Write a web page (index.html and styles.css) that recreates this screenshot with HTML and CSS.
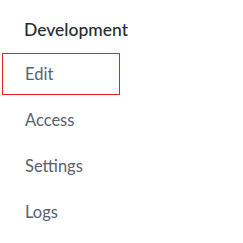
FILE: index.html
```html
<!DOCTYPE html>
<html lang="en">
<head>
    <meta charset="UTF-8">
    <meta name="viewport" content="width=device-width, initial-scale=1.0">
    <title>Development</title>
    <link rel="stylesheet" href="styles.css">
</head>
<body>
    <nav class="side-menu">
        <h3 class="menu-title">Development</h3>
        <ul class="menu-list">
            <li class="menu-item active">Edit</li>
            <li class="menu-item">Access</li>
            <li class="menu-item">Settings</li>
            <li class="menu-item">Logs</li>
        </ul>
    </nav>
</body>
</html>
```

FILE: styles.css
```css
body { margin: 0; background: #fff; font-family: Lato, 'Open Sans', sans-serif; }
.side-menu { padding: 18px 0 0 2px; }
.menu-title { margin: 0 0 11px 22px; font-size: 17.5px; font-weight: 500; color: #2a2a30; line-height: 24px; }
.menu-list { list-style: none; margin: 0; padding: 0; }
.menu-item { width: 118px; height: 42px; box-sizing: border-box; padding-left: 22px; margin-bottom: 4px; display: flex; align-items: center; font-size: 16.5px; color: #5c5e6d; border: 1px solid transparent; }
.menu-item.active { border-color: #e0242c; }
```
